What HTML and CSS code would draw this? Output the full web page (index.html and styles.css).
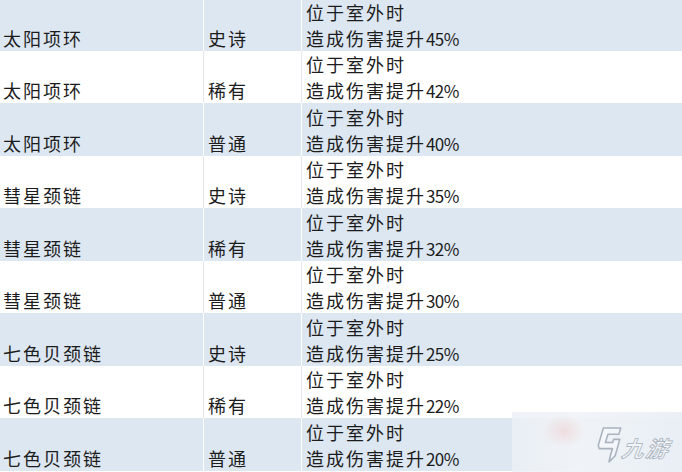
FILE: index.html
```html
<!DOCTYPE html>
<html lang="zh-CN">
<head>
<meta charset="utf-8">
<link rel="stylesheet" href="styles.css">
</head>
<body>
<div class="page">
  <div class="grid">
    <div class="row blue"><div class="cell name">太阳项环</div><div class="cell rank">史诗</div><div class="cell eff"><p class="lines">位于室外时<br>造成伤害提升<span class="num">45%</span></p></div></div>
    <div class="row white"><div class="cell name">太阳项环</div><div class="cell rank">稀有</div><div class="cell eff"><p class="lines">位于室外时<br>造成伤害提升<span class="num">42%</span></p></div></div>
    <div class="row blue"><div class="cell name">太阳项环</div><div class="cell rank">普通</div><div class="cell eff"><p class="lines">位于室外时<br>造成伤害提升<span class="num">40%</span></p></div></div>
    <div class="row white"><div class="cell name">彗星颈链</div><div class="cell rank">史诗</div><div class="cell eff"><p class="lines">位于室外时<br>造成伤害提升<span class="num">35%</span></p></div></div>
    <div class="row blue"><div class="cell name">彗星颈链</div><div class="cell rank">稀有</div><div class="cell eff"><p class="lines">位于室外时<br>造成伤害提升<span class="num">32%</span></p></div></div>
    <div class="row white"><div class="cell name">彗星颈链</div><div class="cell rank">普通</div><div class="cell eff"><p class="lines">位于室外时<br>造成伤害提升<span class="num">30%</span></p></div></div>
    <div class="row blue"><div class="cell name">七色贝颈链</div><div class="cell rank">史诗</div><div class="cell eff"><p class="lines">位于室外时<br>造成伤害提升<span class="num">25%</span></p></div></div>
    <div class="row white"><div class="cell name">七色贝颈链</div><div class="cell rank">稀有</div><div class="cell eff"><p class="lines">位于室外时<br>造成伤害提升<span class="num">22%</span></p></div></div>
    <div class="row blue"><div class="cell name">七色贝颈链</div><div class="cell rank">普通</div><div class="cell eff"><p class="lines">位于室外时<br>造成伤害提升<span class="num">20%</span></p></div></div>
  </div>
  <div class="watermark">
    <div class="blush"></div>
    <svg class="logo" viewBox="0 0 26 36" width="27" height="37" aria-hidden="true">
      <path d="M8 2 H25 L23 8 H12.5 L10 16 H17 L18 13 H24 L19.5 29 L13.5 35 L15 28 L17 22 H4 L3 19 Z" fill="rgba(255,255,255,0.35)" stroke="#a9b2bd" stroke-width="1.5" stroke-linejoin="round"/>
    </svg>
    <span class="brand">九游</span>
  </div>
</div>
</body>
</html>
```
FILE: styles.css
```css
html, body {
  margin: 0;
  padding: 0;
  background: #ffffff;
}
.page {
  position: relative;
  width: 682px;
  height: 472px;
  overflow: hidden;
}
.grid {
  margin-top: -2px;
  width: 682px;
  display: grid;
  grid-template-columns: 203px 98px 381px;
  grid-auto-rows: 52.5px;
  font-family: "Noto Sans CJK SC", "Noto Sans", sans-serif;
  font-size: 18px;
  letter-spacing: 2px;
  color: #1c1c1c;
}
.row { display: contents; }
.cell {
  display: flex;
  align-items: flex-end;
  padding-left: 4px;
  line-height: 26px;
  white-space: nowrap;
  box-sizing: border-box;
}
.cell.name { padding-left: 3px; }
.cell.rank, .cell.eff { border-left: 1px solid #e3e6ea; }
.blue > .cell { background: #dde7f2; }
.blue > .cell.rank, .blue > .cell.eff { border-left-color: #ffffff; }
.white > .cell { background: #ffffff; }
.lines { margin: 0; }
.num {
  font-size: 17px;
  line-height: 1;
  letter-spacing: -0.6px;
}
.watermark {
  position: absolute;
  left: 512px;
  top: 412px;
  width: 170px;
  height: 60px;
  background: linear-gradient(to right, rgba(236,240,245,0.85), rgba(240,244,248,0.95) 40%, rgba(234,239,245,0.95));
  display: flex;
  align-items: center;
  justify-content: flex-end;
  gap: 4px;
  box-sizing: border-box;
  padding-top: 4px;
}
.blush {
  position: absolute;
  left: 30px;
  top: 2px;
  width: 44px;
  height: 34px;
  border-radius: 50%;
  background: radial-gradient(closest-side, rgba(240,200,200,0.5), rgba(240,200,200,0));
}
.logo { display: block; flex: none; }
.brand {
  flex: none;
  width: 56px;
  font-family: "Noto Sans CJK SC", sans-serif;
  font-size: 22px;
  font-weight: 700;
  line-height: 24px;
  color: rgba(255,255,255,0.4);
  -webkit-text-stroke: 0.8px #a9b2bd;
  transform: skewX(-22deg);
  letter-spacing: 2px;
  padding-top: 6px;
  white-space: nowrap;
}
```
